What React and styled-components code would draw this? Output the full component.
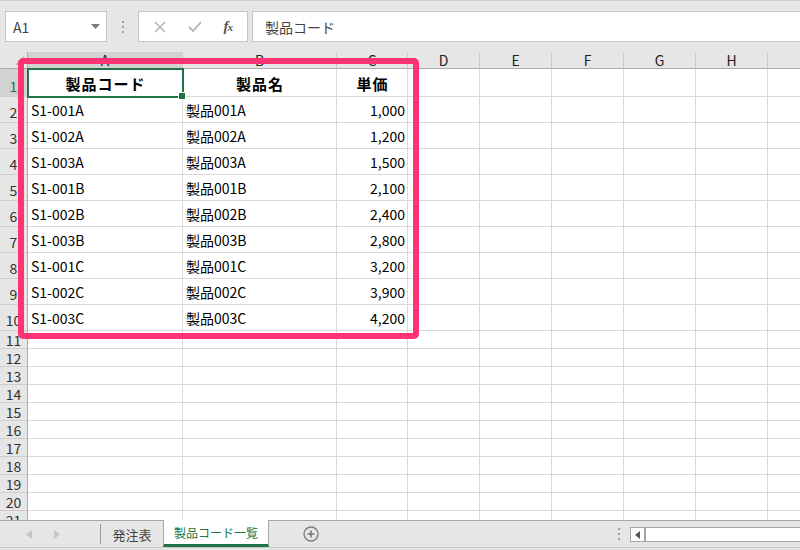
import React from "react";
import styled, { createGlobalStyle, css } from "styled-components";

const GlobalStyle = createGlobalStyle`
  html, body { margin: 0; padding: 0; overflow: hidden; }
  body { font-family: "Noto Sans CJK JP", "Noto Sans", sans-serif; }
  * { box-sizing: border-box; }
`;

const FONT = `"Noto Sans CJK JP", "Noto Sans", sans-serif`;
const GREEN = "#217346";
const GRID = "#d9d9d9";

const Shell = styled.div`
  width: 800px;
  height: 550px;
  display: flex;
  flex-direction: column;
  background: #e6e6e6;
  overflow: hidden;
  font-family: ${FONT};
`;

/* ---------- formula bar ---------- */
const FormulaBar = styled.div`
  height: 52px;
  flex: none;
  display: flex;
  align-items: flex-start;
  padding: 10px 0 0 5px;
  border-top: 1px solid #d0d0d0;
`;

const Field = styled.div`
  height: 31px;
  background: #fff;
  border: 1px solid #c6c6c6;
  display: flex;
  align-items: center;
  color: #444;
  font-size: 14px;
`;

const NameBox = styled(Field)`
  width: 102px;
  padding: 0 6px 0 7px;
  justify-content: space-between;
`;

const Grip = styled.div`
  width: 31px;
  height: 31px;
  display: flex;
  flex-direction: column;
  align-items: center;
  justify-content: center;
  gap: 3px;
  span {
    width: 2px;
    height: 2px;
    background: #a0a0a0;
  }
`;

const FxBox = styled(Field)`
  width: 110px;
  justify-content: space-around;
  padding: 0 4px;
`;

const FxLabel = styled.span`
  font-family: "Liberation Serif", serif;
  font-style: italic;
  font-weight: 700;
  color: #555;
  font-size: 15px;
  letter-spacing: -1px;
  small { font-size: 11px; }
`;

const FormulaInput = styled(Field)`
  flex: 1;
  margin-left: 4px;
  padding-left: 12px;
  border-right: none;
`;

/* ---------- sheet ---------- */
const Sheet = styled.div`
  flex: 1;
  position: relative;
  overflow: hidden;
  background: #fff;
`;

const Grid = styled.div`
  display: grid;
  grid-template-columns: 28px 155px 154px 71px 72px 72px 72px 72px 72px 72px;
  grid-template-rows: 17px 28px repeat(9, 26px) repeat(11, 18px);
  width: 840px;
`;

const Corner = styled.div`
  background: #e6e6e6;
  border-right: 1px solid #ababab;
  border-bottom: 1px solid #ababab;
  display: flex;
  align-items: flex-end;
  justify-content: flex-end;
  padding: 0 3px 3px 0;
`;

const ColHead = styled.div`
  background: ${(p) => (p.$active ? "#d2d2d2" : "#e6e6e6")};
  border-right: 1px solid #cdcdcd;
  border-bottom: 1px solid ${(p) => (p.$active ? GREEN : "#ababab")};
  color: #222;
  font-size: 14px;
  line-height: 16px;
  text-align: center;
  overflow: hidden;
`;

const RowHead = styled.div`
  background: ${(p) => (p.$active ? "#d2d2d2" : "#e6e6e6")};
  border-right: 1px solid ${(p) => (p.$active ? GREEN : "#ababab")};
  border-bottom: 1px solid #cdcdcd;
  color: ${(p) => (p.$active ? GREEN : "#333")};
  font-size: 14px;
  line-height: 14px;
  display: flex;
  align-items: flex-end;
  justify-content: center;
  overflow: hidden;
  padding-bottom: ${(p) => (p.$tall ? "3px" : "1px")};
`;

const Cell = styled.div`
  position: relative;
  border-right: 1px solid ${GRID};
  border-bottom: 1px solid ${GRID};
  color: #000;
  font-size: 14px;
  line-height: 16px;
  display: flex;
  align-items: flex-end;
  padding: 0 2px 4px 3px;
  white-space: nowrap;
  overflow: visible;
  justify-content: ${(p) =>
    p.$align === "right" ? "flex-end" : p.$align === "center" ? "center" : "flex-start"};
  ${(p) =>
    p.$bold &&
    css`
      font-weight: 700;
      font-size: 15px;
      letter-spacing: 1px;
      padding-bottom: 4px;
    `}
  ${(p) =>
    p.$selected &&
    css`
      &::after {
        content: "";
        position: absolute;
        top: -1px;
        left: -1px;
        right: -2px;
        bottom: -2px;
        border: 2px solid ${GREEN};
        pointer-events: none;
        z-index: 2;
      }
      &::before {
        content: "";
        position: absolute;
        right: -4px;
        bottom: -4px;
        width: 6px;
        height: 6px;
        background: ${GREEN};
        border: 1px solid #fff;
        z-index: 3;
      }
    `}
`;

const Highlight = styled.div`
  position: absolute;
  left: 18px;
  top: 6px;
  width: 401px;
  height: 281px;
  border: 6px solid #ff3371;
  border-radius: 5px;
  pointer-events: none;
  z-index: 4;
`;

/* ---------- tab bar ---------- */
const TabBar = styled.div`
  height: 30px;
  flex: none;
  border-top: 1px solid #a6a6a6;
  display: flex;
  align-items: flex-start;
  position: relative;
  &::after {
    content: "";
    position: absolute;
    left: 0;
    right: 0;
    bottom: 2px;
    height: 1px;
    background: #c6c6c6;
  }
`;

const NavArrows = styled.div`
  width: 100px;
  height: 26px;
  display: flex;
  align-items: center;
  padding-left: 26px;
  gap: 22px;
`;

const TabSep = styled.div`
  width: 1px;
  height: 20px;
  margin-top: 3px;
  background: #9a9a9a;
`;

const Tab = styled.div`
  width: ${(p) => p.$width}px;
  height: 26px;
  display: flex;
  align-items: center;
  justify-content: center;
  white-space: nowrap;
  font-size: ${(p) => (p.$active ? "12px" : "13px")};
  color: ${(p) => (p.$active ? GREEN : "#444")};
  ${(p) =>
    p.$active &&
    css`
      margin-top: -1px;
      height: 27px;
      background: #fff;
      border-left: 1px solid #a6a6a6;
      border-right: 1px solid #a6a6a6;
      border-bottom: 3px solid ${GREEN};
      padding-top: 1px;
    `}
`;

const AddSheet = styled.div`
  margin-left: 34px;
  height: 26px;
  display: flex;
  align-items: center;
`;

const Spacer = styled.div`
  flex: 1;
`;

const TabGrip = styled(Grip)`
  width: 10px;
  height: 26px;
  margin-right: 6px;
`;

const ScrollBar = styled.div`
  width: 170px;
  height: 15px;
  margin-top: 6px;
  border: 1px solid #a6a6a6;
  border-right: none;
  background: #fff;
  display: flex;
`;

const ScrollBtn = styled.div`
  width: 15px;
  border-right: 2px solid #a6a6a6;
  display: flex;
  align-items: center;
  justify-content: center;
`;

const columns = ["A", "B", "C", "D", "E", "F", "G", "H", "I"];

const data = [
  ["S1-001A", "製品001A", "1,000"],
  ["S1-002A", "製品002A", "1,200"],
  ["S1-003A", "製品003A", "1,500"],
  ["S1-001B", "製品001B", "2,100"],
  ["S1-002B", "製品002B", "2,400"],
  ["S1-003B", "製品003B", "2,800"],
  ["S1-001C", "製品001C", "3,200"],
  ["S1-002C", "製品002C", "3,900"],
  ["S1-003C", "製品003C", "4,200"],
];

const header = ["製品コード", "製品名", "単価"];

function renderRow(rowNum) {
  const cells = [];
  cells.push(
    <RowHead key={`h${rowNum}`} $active={rowNum === 1} $tall={rowNum <= 10}>
      {rowNum}
    </RowHead>
  );
  for (let c = 0; c < columns.length; c++) {
    let content = null;
    let align = "left";
    let bold = false;
    if (rowNum === 1 && c < 3) {
      content = header[c];
      align = "center";
      bold = true;
    } else if (rowNum >= 2 && rowNum <= 10 && c < 3) {
      content = data[rowNum - 2][c];
      align = c === 2 ? "right" : "left";
    }
    cells.push(
      <Cell
        key={`${rowNum}-${c}`}
        $align={align}
        $bold={bold}
        $selected={rowNum === 1 && c === 0}
      >
        {content}
      </Cell>
    );
  }
  return cells;
}

export default function App() {
  const rows = [];
  for (let r = 1; r <= 21; r++) rows.push(...renderRow(r));

  return (
    <>
      <GlobalStyle />
      <Shell>
        <FormulaBar>
          <NameBox>
            <span>A1</span>
            <svg width="9" height="5" viewBox="0 0 9 5">
              <path d="M0 0 H9 L4.5 5 Z" fill="#7a7a7a" />
            </svg>
          </NameBox>
          <Grip>
            <span />
            <span />
            <span />
          </Grip>
          <FxBox>
            <svg width="12" height="12" viewBox="0 0 12 12">
              <path d="M1 1 L11 11 M11 1 L1 11" stroke="#b4b4b4" strokeWidth="1.6" />
            </svg>
            <svg width="14" height="12" viewBox="0 0 14 12">
              <path d="M1 6 L5 10 L13 1" stroke="#b4b4b4" strokeWidth="1.8" fill="none" />
            </svg>
            <FxLabel>
              f<small>x</small>
            </FxLabel>
          </FxBox>
          <FormulaInput>製品コード</FormulaInput>
        </FormulaBar>

        <Sheet>
          <Grid>
            <Corner>
              <svg width="9" height="9" viewBox="0 0 9 9">
                <path d="M9 0 V9 H0 Z" fill="#b8b8b8" />
              </svg>
            </Corner>
            {columns.map((c) => (
              <ColHead key={c} $active={c === "A"}>
                {c}
              </ColHead>
            ))}
            {rows}
          </Grid>
          <Highlight />
        </Sheet>

        <TabBar>
          <NavArrows>
            <svg width="6" height="9" viewBox="0 0 6 9">
              <path d="M6 0 V9 L0 4.5 Z" fill="#c4c4c4" />
            </svg>
            <svg width="6" height="9" viewBox="0 0 6 9">
              <path d="M0 0 V9 L6 4.5 Z" fill="#c4c4c4" />
            </svg>
          </NavArrows>
          <TabSep />
          <Tab $width={62}>発注表</Tab>
          <Tab $width={106} $active>
            製品コード一覧
          </Tab>
          <AddSheet>
            <svg width="16" height="16" viewBox="0 0 16 16">
              <circle cx="8" cy="8" r="7" fill="none" stroke="#7a7a7a" strokeWidth="1.3" />
              <path d="M8 4.5 V11.5 M4.5 8 H11.5" stroke="#7a7a7a" strokeWidth="1.6" />
            </svg>
          </AddSheet>
          <Spacer />
          <TabGrip>
            <span />
            <span />
            <span />
          </TabGrip>
          <ScrollBar>
            <ScrollBtn>
              <svg width="5" height="8" viewBox="0 0 5 8">
                <path d="M5 0 V8 L0 4 Z" fill="#555" />
              </svg>
            </ScrollBtn>
          </ScrollBar>
        </TabBar>
      </Shell>
    </>
  );
}
